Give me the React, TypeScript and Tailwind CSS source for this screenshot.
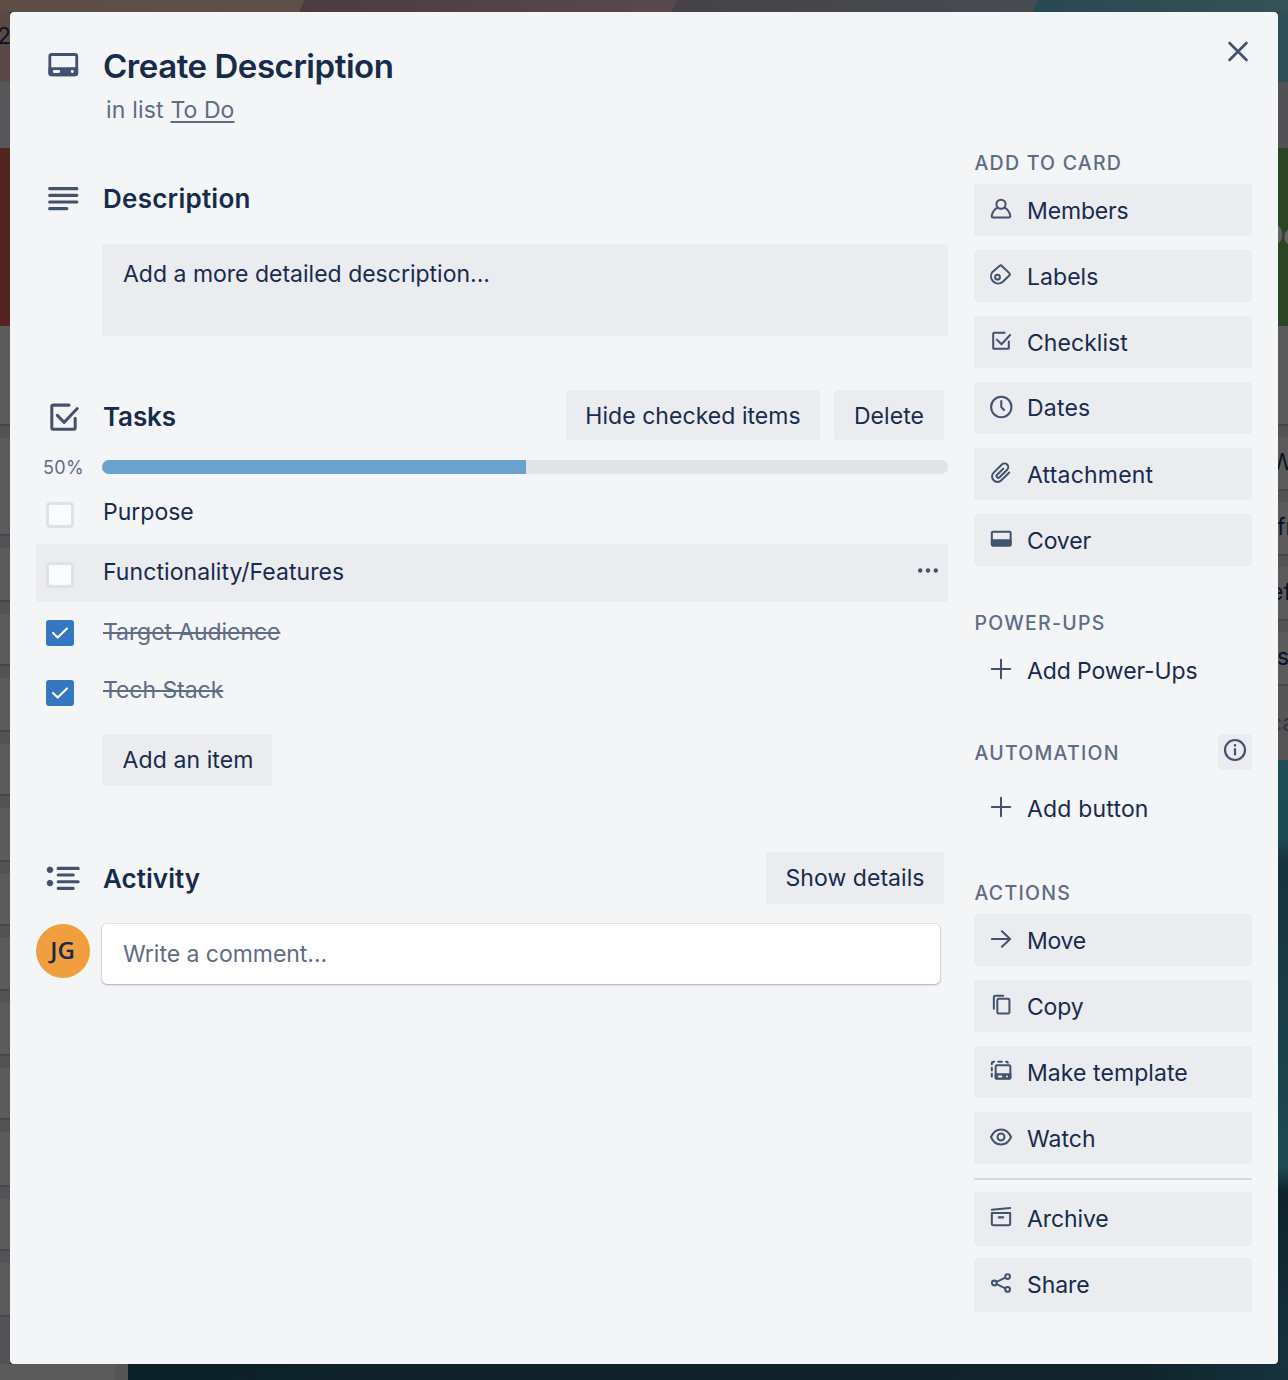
import type { ReactNode } from "react";

const INK = "text-[#172b4d]";
const STROKE = "#42526e";

function Svg({ size = 32, weight = 2, className = "", children }: { size?: number; weight?: number; className?: string; children: ReactNode }) {
  return (
    <svg
      width={size}
      height={size}
      viewBox="0 0 24 24"
      fill="none"
      stroke={STROKE}
      strokeWidth={weight}
      strokeLinecap="round"
      strokeLinejoin="round"
      className={"shrink-0 overflow-visible " + className}
    >
      {children}
    </svg>
  );
}

const CheckBoxPaths = () => (
  <>
    <path d="M16 3H4.500A1 1 0 0 0 3.500 4V19.500A1 1 0 0 0 4.500 20.500H19.500A1 1 0 0 0 20.500 19.500V12.500" />
    <path d="M7.500 10.500l5 5L22 5.500" />
  </>
);

const icons: Record<string, ReactNode> = {
  members: (
    <>
      <circle cx="12" cy="6.800" r="5" />
      <path d="M8.400 10.300C4.500 12.600 2.400 16 1.900 19.600Q1.700 21.300 3.400 21.300H20.600Q22.300 21.300 22.100 19.600C21.600 16 19.500 12.600 15.600 10.300" />
    </>
  ),
  labels: (
    <>
      <path d="M10.600 1.900Q11.800 .900 13 2.100L21.300 10.200Q22.300 11.300 21.300 12.300L13.700 19.700A7.900 7.900 0 0 1 2.400 9Z" />
      <circle cx="8.200" cy="14.400" r="2.600" />
    </>
  ),
  checklist: <CheckBoxPaths />,
  dates: (
    <>
      <circle cx="12.300" cy="12" r="11.100" />
      <path d="M12.300 5.500V12L15.300 15.300" />
    </>
  ),
  attachment: (
    <path d="M14.500 7.200L7.700 14a1.900 1.900 0 0 0 2.700 2.700l8.300-8.300a4 4 0 0 0-5.700-5.700L4 11.600a5.900 5.900 0 0 0 8.400 8.400L21 11.400" />
  ),
  cover: (
    <>
      <rect x="2" y="4" width="20.500" height="15.200" rx="1.300" />
      <path d="M2 13.500H22.500V18Q22.500 19.200 21 19.200H3.500Q2 19.200 2 18Z" fill={STROKE} />
    </>
  ),
  plus: <path d="M12 2V22M2 12H22" />,
  move: <path d="M2 12H22M13 3.500L22 12L13 20.500" />,
  copy: (
    <>
      <path d="M4.200 16V3.500Q4.200 2 5.700 2H14.500" />
      <rect x="8" y="5.300" width="13.200" height="16" rx="1.500" />
    </>
  ),
  template: (
    <>
      <rect x="6.200" y="5.800" width="16" height="14.700" rx="1.300" />
      <path d="M6.200 15.500H22.200V20H6.200Z" fill={STROKE} />
      <path d="M2 15V18M2 8.500V11.500M2 4.500V4Q2 2 4 2H4.500M9 2H13M17.500 2H18Q19.500 2 19.500 3" />
      <path d="M9.500 18H12.500M18.500 18H18.600" stroke="#ebecf0" strokeWidth="2" />
    </>
  ),
  watch: (
    <>
      <path d="M1 12C3.500 6.500 7.300 3.800 12 3.800S20.500 6.500 23 12C20.500 17.500 16.700 20.200 12 20.200S3.500 17.500 1 12Z" />
      <circle cx="12" cy="12" r="3.800" />
    </>
  ),
  archive: (
    <>
      <path d="M2 4L22 2.200M2 7.600H22V19.500Q22 21 20.500 21H3.500Q2 21 2 19.500Z" />
      <path d="M9.500 12.400H14.500" />
    </>
  ),
  share: (
    <>
      <circle cx="4.700" cy="12" r="2.600" />
      <circle cx="19.200" cy="5" r="2.600" />
      <circle cx="19.200" cy="19" r="2.600" />
      <path d="M7.200 10.700L16.700 6.200M7.200 13.300L16.700 17.800" />
    </>
  ),
};

function SideItem({ icon, label, className = "h-[52px] bg-[#ebecf0]", textClass = "tracking-[0.050px]" }: { icon: string; label: string; className?: string; textClass?: string }) {
  return (
    <button className={"flex w-full shrink-0 items-center rounded-[4px] pl-[15.500px] " + className}>
      <Svg size={22} weight={2.200} className="mb-[3px]">{icons[icon]}</Svg>
      <span className={"ml-[15.500px] mt-[2px] whitespace-nowrap text-[23px] leading-none " + textClass}>{label}</span>
    </button>
  );
}

function SideHeading({ children }: { children: ReactNode }) {
  return <h3 className="pl-[0.500px] text-[19.500px] font-medium leading-[22px] tracking-[1.250px] text-[#5e6c84]">{children}</h3>;
}

function Checkbox({ checked = false }: { checked?: boolean }) {
  return checked ? (
    <span className="flex h-[26px] w-[28px] items-center justify-center rounded-[3px] bg-[#3277bf]">
      <svg width="18" height="14" viewBox="0 0 18 14" fill="none" stroke="#fff" strokeWidth="2.200" strokeLinecap="round" strokeLinejoin="round">
        <path d="M2 7L6.700 11.500L16 2.500" />
      </svg>
    </span>
  ) : (
    <span className="h-[26px] w-[28px] rounded-[4px] border-[3px] border-[#dfe1e6] bg-[#fafbfc]" />
  );
}

function GreyButton({ children, className }: { children: ReactNode; className: string }) {
  return (
    <button className={"flex items-center justify-center whitespace-nowrap rounded-[4px] bg-[#ebecf0] text-[23px] leading-none " + className}>
      {children}
    </button>
  );
}

const leftCards = [100, 98, 54, 52, 54, 52, 54, 52, 53, 53, 52, 55, 52, 54];

function Backdrop() {
  return (
    <div className="absolute inset-0 flex flex-col bg-[#10232b]" aria-hidden="true">
      <div className="h-[12px] shrink-0 bg-[linear-gradient(115deg,#5f4d47_0%,#5d5049_23.500%,#4c3c42_23.600%,#57494c_52.300%,#47424a_52.400%,#464b51_80.200%,#294951_80.300%,#345257_100%)]" />
      <div className="flex flex-1 justify-between">
        <div className="flex w-[10px] flex-col overflow-hidden bg-[#535355]">
          <div className="h-[70px] shrink-0 bg-[#5b4946] pt-[8px] text-[23px] leading-[32px] text-[#091225]"><span className="-ml-[3px]">2</span></div>
          <div className="h-[66px] shrink-0 bg-[#575759]" />
          <div className="h-[178px] shrink-0 bg-[#54241f]" />
          {leftCards.map((h, i) => (
            <div key={i} className="mb-[12px] shrink-0 border-b-2 border-[#46474e] bg-[#5b5b5b]" style={{ height: h }} />
          ))}
        </div>
        <div className="flex w-[10px] flex-col overflow-hidden bg-[linear-gradient(#24535b_0,#1f4c54_825px,#16323d_850px,#1d444c_1080px,#204951_1155px,#10232b_1180px,#16323d_1352px)] text-[23px] text-[#091225]">
          <div className="h-[70px] shrink-0 bg-[#2f4f56]" />
          <div className="h-[66px] shrink-0 bg-[#525254]" />
          <div className="flex h-[178px] shrink-0 items-center bg-[#2c4525] pb-[4px] text-[28px] font-semibold text-[#646665]"><span className="-ml-[15px]">Do</span></div>
          <div className="h-[100px] shrink-0 border-b-2 border-[#46474e] bg-[#5b5b5b]" />
          {["W", "fr", "ef", "s"].map((t) => (
            <div key={t} className="h-[65px] shrink-0 border-t-[11px] border-b-2 border-t-[#535355] border-b-[#46474e] bg-[#5b5b5b] leading-[51px]">
              <span className={t === "W" ? "-ml-[7px]" : t === "ef" ? "-ml-[8px]" : "-ml-[1px]"}>{t}</span>
            </div>
          ))}
          <div className="h-[74px] shrink-0 bg-[#555555] leading-[74px] text-[#30343b]"><span className="-ml-[9px]">ca</span></div>
        </div>
      </div>
      <div className="flex h-[16px] shrink-0 bg-[linear-gradient(90deg,#0c2028,#10232b_88%,#16323d)]">
        <div className="w-[128px] border-r-[13px] border-[#555] bg-[#5b5b5b]" />
      </div>
    </div>
  );
}

export default function App() {
  return (
    <div className={"relative h-[1380px] w-[1288px] overflow-hidden px-[10px] pt-[12px] font-['Inter',sans-serif] " + INK}>
      <Backdrop />
      <main className="relative flex h-[1352px] w-[1268px] rounded-[4px] bg-[#f4f5f7]">
        <section className="w-[938px] shrink-0 pl-[26px]">
          <header className="flex h-[126px] pt-[37px]">
            <Svg size={34} className="ml-[10px] -mt-px">
              <rect x="2.700" y="4.600" width="19" height="14.300" rx="1.300" />
              <path d="M2.700 14.500H21.700V17.800Q21.700 18.900 20.500 18.900H4Q2.700 18.900 2.700 17.800Z" fill={STROKE} />
              <path d="M5.800 16.600H9M18.500 16.600H18.600" stroke="#f4f5f7" strokeWidth="2" />
            </Svg>
            <div className="ml-[23px]">
              <h1 className="whitespace-nowrap text-[33px] font-semibold leading-[34px] tracking-[-0.450px]">Create Description</h1>
              <p className="ml-[3px] mt-[12px] text-[23px] leading-[30px] tracking-[0.200px] text-[#5e6c84]">
                in list <span className="tracking-[0.050px] underline decoration-2 underline-offset-[3px]">To Do</span>
              </p>
            </div>
          </header>

          <div className="flex h-[106px] items-center pt-[16px]">
            <Svg size={34} weight={2.200} className="ml-[10px]">
              <path d="M2.600 4.700H21.800M2.600 9.400H21.800M2.600 14.100H21.800M2.600 18.800H14.700" />
            </Svg>
            <h2 className="ml-[23px] text-[26px] font-semibold leading-none tracking-[0.250px]">Description</h2>
          </div>
          <div className="ml-[66px] h-[92px] w-[846px] rounded-[4px] bg-[#ebecf0] pl-[21px] pt-[15px] text-[23px] leading-[30px]">Add a more detailed description...</div>

          <div className="mt-[54px] flex h-[52px] items-center">
            <Svg size={33} weight={2.200} className="ml-[11px] mt-[2px]"><CheckBoxPaths /></Svg>
            <h2 className="ml-[23px] mt-[2px] text-[26px] font-semibold leading-none tracking-[-0.150px]">Tasks</h2>
            <GreyButton className="mb-[2px] ml-auto h-[50px] w-[254px] pt-[2px] tracking-[0.050px]">Hide checked items</GreyButton>
            <GreyButton className="mb-[2px] ml-[14px] mr-[4px] h-[50px] w-[110px] pt-[2px] tracking-[0.080px]">Delete</GreyButton>
          </div>
          <div className="mt-[14px] flex h-[24px] items-center">
            <span className="w-[66px] pl-[7px] text-[18px] leading-none tracking-[0.400px] text-[#5e6c84]">50%</span>
            <div className="mb-[2px] h-[14px] w-[846px] overflow-hidden rounded-full bg-[#e2e4e9]">
              <div className="h-full w-[424px] bg-[#6ba2cb]" />
            </div>
          </div>
          <ul className="mt-[4px] text-[23px] leading-[30px]">
            <li className="flex h-[60px] items-start pl-[10px] pt-[18px]">
              <Checkbox />
              <span className="-mt-[5px] ml-[29px]">Purpose</span>
            </li>
            <li className="flex h-[58px] w-[912px] items-start rounded-[4px] bg-[#ebecf0] pl-[10px] pt-[18px]">
              <Checkbox />
              <span className="-mt-[5px] ml-[29px] tracking-[0.070px]">Functionality/Features</span>
              <svg width="22" height="6" viewBox="0 0 22 6" fill={STROKE} className="ml-auto mr-[9px] mt-[5px]">
                <circle cx="3.200" cy="3.500" r="2.200" />
                <circle cx="11" cy="3.500" r="2.200" />
                <circle cx="18.800" cy="3.500" r="2.200" />
              </svg>
            </li>
            <li className="flex h-[60px] items-start pl-[10px] pt-[18px] text-[#5e6c84]">
              <Checkbox checked />
              <span className="-mt-[3px] ml-[29px] tracking-[-0.080px] line-through decoration-2">Target Audience</span>
            </li>
            <li className="flex h-[60px] items-start pl-[10px] pt-[18px] text-[#5e6c84]">
              <Checkbox checked />
              <span className="-mt-[5px] ml-[29px] tracking-[-0.050px] line-through decoration-2">Tech Stack</span>
            </li>
          </ul>
          <GreyButton className="ml-[66px] mt-[12px] h-[52px] w-[170px] pl-[2px] tracking-[0.080px]">Add an item</GreyButton>

          <div className="mt-[66px] flex h-[52px] items-center">
            <Svg size={34} className="ml-[10px] mt-[2px]">
              <path d="M8.600 4.500H22.700M8.600 9.200H19.200M8.600 13.900H22.700M8.600 18.600H19.200" strokeWidth="2.200" />
              <circle cx="2.800" cy="5.500" r="2" fill={STROKE} strokeWidth="0.600" />
              <circle cx="2.800" cy="14.900" r="2" fill={STROKE} strokeWidth="0.600" />
            </Svg>
            <h2 className="ml-[23px] mt-[2px] text-[26px] font-semibold leading-none tracking-[0.050px]">Activity</h2>
            <GreyButton className="ml-auto mr-[4px] h-[52px] w-[178px] tracking-[0.050px]">Show details</GreyButton>
          </div>
          <div className="mt-[20px] flex">
            <span className="flex h-[54px] w-[54px] items-center justify-center rounded-full bg-[#f19e3f] pb-[2px] pr-[1px] font-['Open_Sans',sans-serif] text-[24px] font-semibold text-[#172b4d]">JG</span>
            <div className="ml-[12px] h-[60px] w-[838px] rounded-[5px] bg-white pl-[21px] pt-[15px] text-[23px] leading-[30px] tracking-[-0.030px] text-[#5e6c84] shadow-[0_1px_2px_#091e4240,0_0_0_1px_#091e4214]">Write a comment...</div>
          </div>
        </section>

        <aside className="ml-[26px] flex w-[278px] flex-col">
          <div className="flex h-[140px] justify-end pt-[24px]">
            <svg width="32" height="32" viewBox="0 0 32 32" stroke={STROKE} strokeWidth="2.600" strokeLinecap="round" className="-mr-[2px]">
              <path d="M7.500 7L24.500 24M24.500 7L7.500 24" />
            </svg>
          </div>
          <SideHeading>ADD TO CARD</SideHeading>
          <div className="mt-[10px] flex flex-col gap-[14px]">
            <SideItem icon="members" label="Members" textClass="-tracking-[0.150px]" />
            <SideItem icon="labels" label="Labels" />
            <SideItem icon="checklist" label="Checklist" />
            <SideItem icon="dates" label="Dates" textClass="mb-[2px] tracking-[0.200px]" />
            <SideItem icon="attachment" label="Attachment" textClass="tracking-[0.200px]" />
            <SideItem icon="cover" label="Cover" textClass="-tracking-[0.150px]" />
          </div>
          <div className="mt-[46px]"><SideHeading>POWER-UPS</SideHeading></div>
          <SideItem icon="plus" label="Add Power-Ups" className="mt-[10px] h-[52px]" textClass="-tracking-[0.100px]" />
          <div className="mt-[38px] flex h-[36px] items-center justify-between">
            <div className="mt-[2px]"><SideHeading>AUTOMATION</SideHeading></div>
            <button className="flex h-[36px] w-[34px] items-center justify-center rounded-[4px] bg-[#ebecf0]">
              <Svg size={24} weight={2.200} className="mb-[4px]">
                <circle cx="12" cy="12" r="10" />
                <path d="M12 11V16.500" />
                <path d="M12 7.300V7.400" strokeWidth="2.400" />
              </Svg>
            </button>
          </div>
          <SideItem icon="plus" label="Add button" className="mt-[12px] h-[52px]" textClass="tracking-[0.180px]" />
          <div className="mt-[48px]"><SideHeading>ACTIONS</SideHeading></div>
          <div className="mt-[10px] flex flex-col gap-[14px]">
            <SideItem icon="move" label="Move" textClass="-tracking-[0.300px]" />
            <SideItem icon="copy" label="Copy" textClass="-tracking-[0.200px]" />
            <SideItem icon="template" label="Make template" textClass="tracking-[0.080px]" />
            <SideItem icon="watch" label="Watch" />
          </div>
          <hr className="mt-[14px] border-t-2 border-[#d6d9e0]" />
          <div className="mt-[12px] flex flex-col gap-[12px]">
            <SideItem icon="archive" label="Archive" className="h-[54px] bg-[#ebecf0] pb-[2px]" textClass="-tracking-[0.100px]" />
            <SideItem icon="share" label="Share" className="h-[54px] bg-[#ebecf0] pb-[2px]" textClass="-tracking-[0.050px]" />
          </div>
        </aside>
      </main>
    </div>
  );
}
